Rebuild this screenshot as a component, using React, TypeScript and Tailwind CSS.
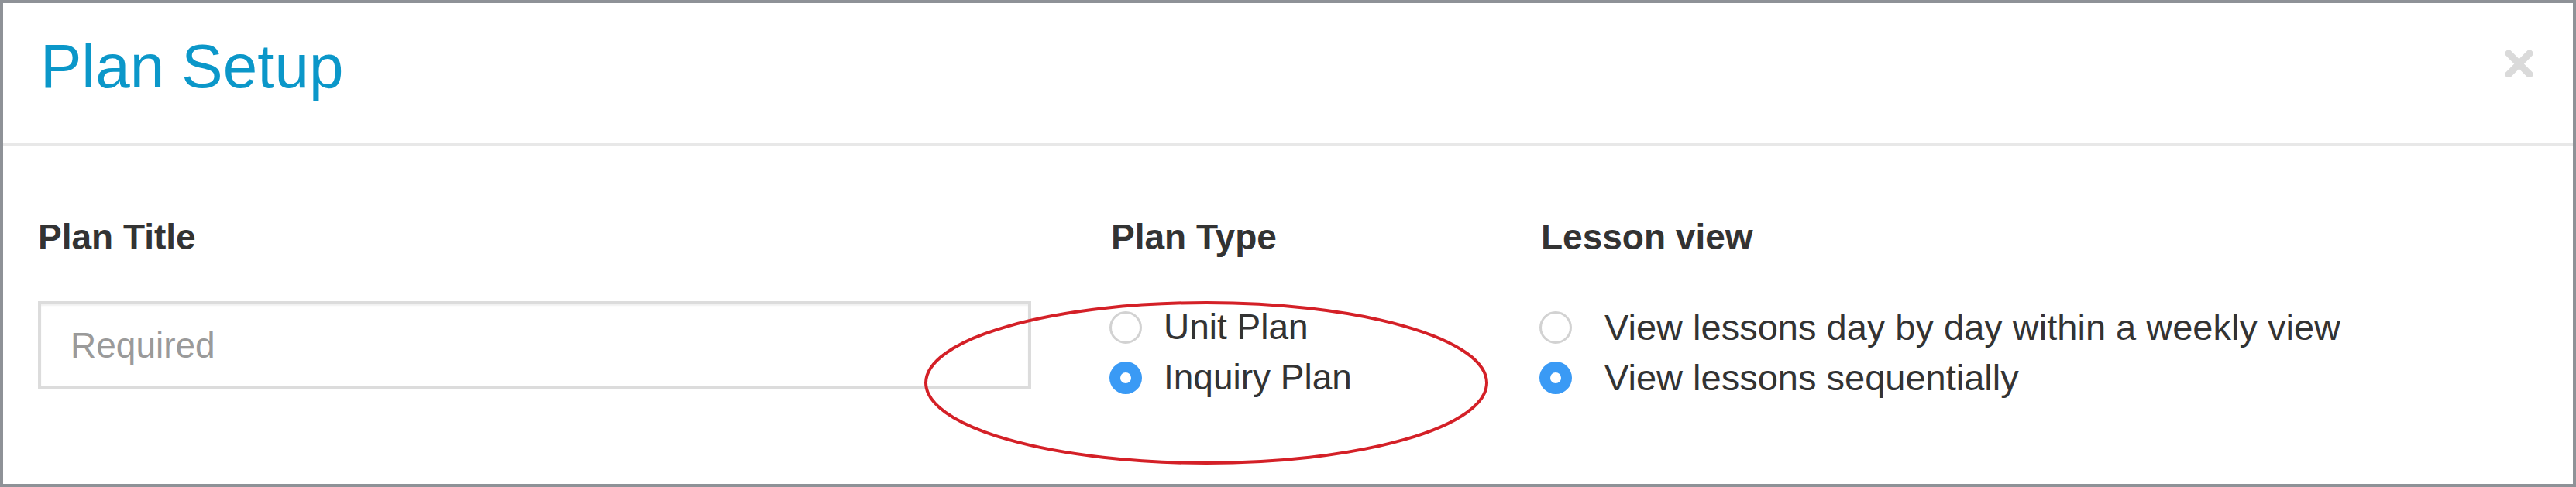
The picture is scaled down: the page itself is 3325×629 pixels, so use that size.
import React from "react";

function Radio({checked, label, gap = "ml-[28px]", size = "text-[46px]"}: {checked?: boolean; label: string; gap?: string; size?: string}) {
    return (
        <label className={`flex items-center h-[65px] leading-[65px] text-[#333] ${size}`}>
            {checked ? (
                <span className="flex items-center justify-center w-[42px] h-[42px] rounded-full bg-[#3a9af5]">
                    <span className="w-[14px] h-[14px] rounded-full bg-white" />
                </span>
            ) : (
                <span className="w-[42px] h-[42px] rounded-full border-[3px] border-[#d2d2d2] bg-white" />
            )}
            <span className={gap}>{label}</span>
        </label>
    );
}

export default function App() {
    return (
        <div className="relative flex flex-col w-[3325px] h-[629px] border-4 border-[#8e9297] bg-white font-['Liberation_Sans',Arial,sans-serif]">
            <header className="flex justify-between h-[185px] border-b-4 border-[#e8e8e8] pl-[48px] pr-[51px]">
                <h1 className="pt-[42px] text-[80px] leading-[80px] text-[#0b97c9]">Plan Setup</h1>
                <button className="mt-[61px] h-[35px]" aria-label="Close">
                    <svg width="37" height="35" viewBox="0 0 37 35">
                        <path d="M5 4 L32 31 M32 4 L5 31" stroke="#dadada" strokeWidth="9" strokeLinecap="square" />
                    </svg>
                </button>
            </header>

            <div className="flex pl-[45px] pt-[94px]">
                <div className="w-[1282px]">
                    <div className="text-[46px] leading-[46px] font-bold text-[#333]">Plan Title</div>
                    <input
                        placeholder="Required"
                        className="mt-[60px] w-full h-[113px] border-4 border-[#dcdcdc] pl-[38px] text-[46px] text-[#333] placeholder:text-[#9a9a9a] shadow-[inset_0_2px_2px_rgba(0,0,0,0.06)] outline-none"
                    />
                </div>

                <div className="ml-[101px] w-[555px]">
                    <div className="pl-[2px] text-[46px] leading-[46px] font-bold text-[#333]">Plan Type</div>
                    <div className="mt-[61px] flex flex-col">
                        <Radio label="Unit Plan" />
                        <Radio label="Inquiry Plan" checked />
                    </div>
                </div>

                <div>
                    <div className="pl-[2px] text-[46px] leading-[46px] font-bold text-[#333]">Lesson view</div>
                    <div className="mt-[61px] flex flex-col">
                        <Radio label="View lessons day by day within a weekly view" gap="ml-[42px]" size="text-[47px]" />
                        <Radio label="View lessons sequentially" checked gap="ml-[42px]" size="text-[47px]" />
                    </div>
                </div>
            </div>

            <svg className="absolute left-[1189px] top-[385px] pointer-events-none" width="728" height="211" viewBox="0 0 728 211">
                <ellipse cx="364" cy="105.5" rx="362" ry="103.5" fill="none" stroke="#d42027" strokeWidth="4" />
            </svg>
        </div>
    );
}
